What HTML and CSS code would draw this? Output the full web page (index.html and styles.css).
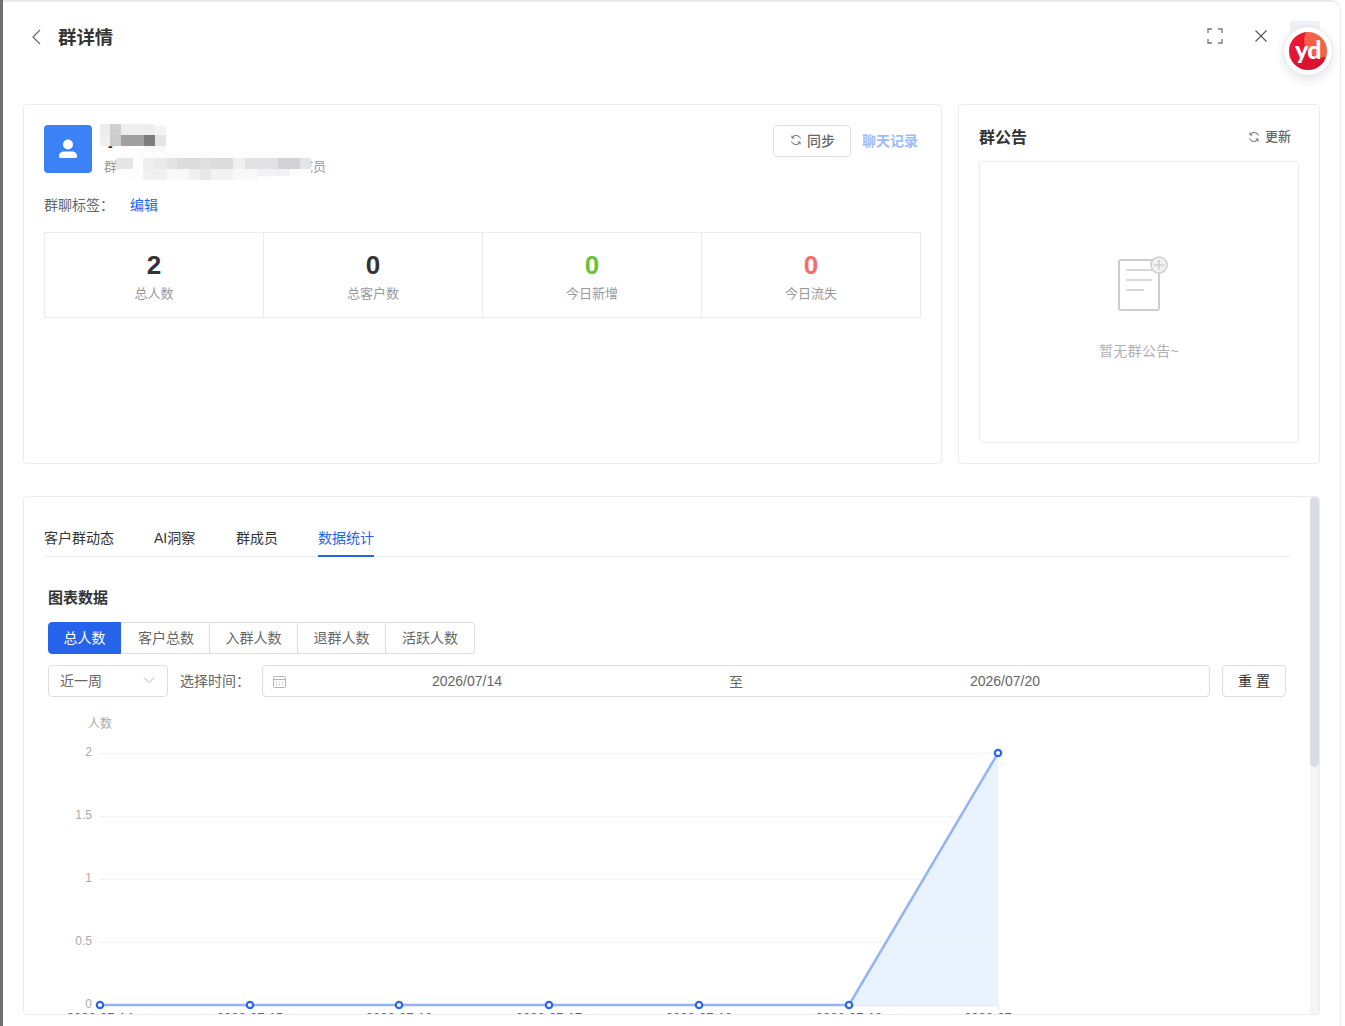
FILE: index.html
```html
<!DOCTYPE html>
<html lang="zh">
<head>
<meta charset="utf-8">
<title>群详情</title>
<link rel="stylesheet" href="styles.css">
</head>
<body>
<div class="shell">
  <div class="strip"></div>
  <main class="drawer">
    <header class="head">
      <div class="head-left">
        <svg class="back" width="10" height="16" viewBox="0 0 10 16"><path d="M9 1 2 8l7 7" fill="none" stroke="#666" stroke-width="1.2"/></svg>
        <h1 class="title">群详情</h1>
      </div>
      <div class="head-right">
        <svg width="16" height="16" viewBox="0 0 16 16" fill="none" stroke="#777" stroke-width="1.3"><path d="M1 5V1h4M11 1h4v4M15 11v4h-4M5 15H1v-4"/></svg>
        <svg width="14" height="14" viewBox="0 0 14 14" fill="none" stroke="#555" stroke-width="1.1"><path d="m1.500 1.500 11 11M12.500 1.500l-11 11"/></svg>
      </div>
    </header>

    <section class="top-row">
      <div class="card info-card">
        <div class="info-head">
          <div class="avatar">
            <svg width="24" height="24" viewBox="0 0 24 24" fill="#fff"><circle cx="12" cy="7.500" r="5"/><path d="M3 19.500c0-3.200 2.200-5 5-5h8c2.800 0 5 1.800 5 5 0 .8-.5 1.500-1.500 1.500h-15C3.500 21 3 20.300 3 19.500z"/></svg>
          </div>
          <div class="info-text">
            <div class="group-name">-</div>
            <div class="group-sub"><span>群</span><span>成员</span></div>
          </div>
          <div class="info-actions">
            <button class="btn-sync">
              <svg class="refresh" width="12" height="12" viewBox="0 0 12 12" fill="none" stroke="#666" stroke-width="1"><path d="M10.500 4.500A4.700 4.700 0 0 0 2 3.800M1.500 7.500A4.700 4.700 0 0 0 10 8.200M2 1.500v2.500h2.300M10 10.500V8H7.700"/></svg>同步
            </button>
            <a class="chat-link">聊天记录</a>
          </div>
        </div>
        <svg class="mosaic" width="240" height="60" viewBox="100 123 240 60">
          <path d="M104 123h40l22 3v20h0v14h-23v-14h-43v-20z" fill="#fbfbfb"/>
          <rect x="100" y="124" width="10" height="11" fill="#ececec"/><rect x="110" y="124" width="11" height="11" fill="#d0d0d0"/><rect x="121" y="124" width="34" height="11" fill="#eeeeee"/><rect x="155" y="126" width="11" height="9" fill="#f4f4f4"/>
          <rect x="100" y="135" width="10" height="11" fill="#f0f0f0"/><rect x="110" y="135" width="11" height="11" fill="#cccccc"/><rect x="121" y="135" width="23" height="11" fill="#a0a0a0"/><rect x="144" y="135" width="11" height="11" fill="#7d7d7d"/><rect x="155" y="135" width="11" height="11" fill="#e4e4e4"/>
          <rect x="144" y="146" width="22" height="12" fill="#f8f8f8"/>
          <path d="M116 158q1-5 17-6h178v22q-30 6-90 6h-80q-20 0-25-8z" fill="#fdfdfd"/>
          <rect x="116" y="158" width="17" height="11" fill="#e6e6e6"/><rect x="143" y="158" width="12" height="11" fill="#eeeeee"/><rect x="155" y="158" width="12" height="11" fill="#eaeaea"/><rect x="167" y="158" width="10" height="11" fill="#e4e4e4"/><rect x="177" y="158" width="23" height="11" fill="#dcdcdc"/><rect x="200" y="158" width="11" height="11" fill="#e0e0e0"/><rect x="211" y="158" width="22" height="11" fill="#dcdcde"/><rect x="233" y="158" width="12" height="11" fill="#f0f0f0"/><rect x="245" y="158" width="33" height="11" fill="#e2e2e4"/><rect x="278" y="158" width="22" height="11" fill="#d2d2d4"/><rect x="300" y="158" width="11" height="11" fill="#e4e4e6"/>
          <rect x="143" y="169" width="24" height="11" fill="#f0f0f0"/><rect x="167" y="169" width="22" height="11" fill="#f8f8f8"/><rect x="189" y="169" width="11" height="11" fill="#f0f0f0"/><rect x="200" y="169" width="11" height="11" fill="#e8e8e8"/><rect x="211" y="169" width="22" height="11" fill="#f2f2f2"/><rect x="233" y="169" width="24" height="11" fill="#f8f8f8"/><rect x="257" y="169" width="33" height="7" fill="#f2f2f2"/>
        </svg>
        <div class="tag-row"><span class="tag-label">群聊标签：</span><a class="tag-edit">编辑</a></div>
        <div class="stats">
          <div class="stat"><strong>2</strong><span>总人数</span></div>
          <div class="stat"><strong>0</strong><span>总客户数</span></div>
          <div class="stat"><strong class="green">0</strong><span>今日新增</span></div>
          <div class="stat"><strong class="red">0</strong><span>今日流失</span></div>
        </div>
      </div>

      <div class="card notice-card">
        <div class="notice-head">
          <h2>群公告</h2>
          <a class="refresh-link">
            <svg class="refresh" width="12" height="12" viewBox="0 0 12 12" fill="none" stroke="#666" stroke-width="1"><path d="M10.500 4.500A4.700 4.700 0 0 0 2 3.800M1.500 7.500A4.700 4.700 0 0 0 10 8.200M2 1.500v2.500h2.300M10 10.500V8H7.700"/></svg>更新
          </a>
        </div>
        <div class="notice-body">
          <svg width="52" height="56" viewBox="0 0 52 56">
            <rect x="1" y="4" width="40" height="50" rx="2" fill="#fff" stroke="#cdcdd2" stroke-width="2"/>
            <path d="M8 14h26M8 24h26M8 34h18" stroke="#cdcdd2" stroke-width="1.500"/>
            <circle cx="41" cy="9" r="8" fill="#f1f1f3" stroke="#cdcdd2" stroke-width="1.500"/>
            <path d="M36 9h10M41 4v10" stroke="#cdcdd2" stroke-width="1.500"/>
          </svg>
          <p>暂无群公告~</p>
        </div>
      </div>
    </section>

    <section class="card data-card">
      <div class="data-main">
        <nav class="tabs">
          <a class="tab">客户群动态</a>
          <a class="tab">AI洞察</a>
          <a class="tab">群成员</a>
          <a class="tab active">数据统计</a>
        </nav>
        <div class="chart-panel">
          <h3 class="panel-title">图表数据</h3>
          <div class="seg">
            <button class="seg-btn active">总人数</button>
            <button class="seg-btn">客户总数</button>
            <button class="seg-btn">入群人数</button>
            <button class="seg-btn">退群人数</button>
            <button class="seg-btn">活跃人数</button>
          </div>
          <div class="filters">
            <div class="select">近一周
              <svg width="12" height="8" viewBox="0 0 12 8"><path d="m1 1.500 5 5 5-5" fill="none" stroke="#b4b4b8" stroke-width="1"/></svg>
            </div>
            <label class="range-label">选择时间：</label>
            <div class="range">
              <svg class="cal" width="13" height="13" viewBox="0 0 13 13" fill="none" stroke="#b4b4b8"><rect x=".5" y="1.500" width="12" height="11" rx="1"/><path d="M.5 4.500h12M3 7h1M6 7h1M9 7h1M3 9.500h1M6 9.500h1M9 9.500h1"/></svg>
              <span class="date first">2026/07/14</span>
              <span class="sep">至</span>
              <span class="date last">2026/07/20</span>
            </div>
            <button class="reset">重 置</button>
          </div>
          <svg class="chart" width="1238" height="314" viewBox="48 700 1238 314">
            <text class="axis-name" x="100" y="728" text-anchor="middle">人数</text>
            <g class="grid">
              <path d="M100 753.500H998M100 816.500H998M100 879.500H998M100 942.500H998"/>
            </g>
            <g class="ylab" text-anchor="end">
              <text x="92" y="756">2</text>
              <text x="92" y="819">1.5</text>
              <text x="92" y="882">1</text>
              <text x="92" y="945">0.5</text>
              <text x="92" y="1008">0</text>
            </g>
            <path d="M849 1005 998 753V1005Z" fill="#e9f3ff"/>
            <g class="grid over"><path d="M886 942.500H998M924 879.500H998M961 816.500H998"/></g>
            <path d="M100 1005.500H998.500V1010" fill="none" stroke="#e0e6f1"/>
            <path d="M100 1005H849L998 753" fill="none" stroke="#94b3f5" stroke-width="2.500"/>
            <g class="dots">
              <circle cx="100" cy="1005" r="3.200"/><circle cx="250" cy="1005" r="3.200"/><circle cx="399" cy="1005" r="3.200"/><circle cx="549" cy="1005" r="3.200"/><circle cx="699" cy="1005" r="3.200"/><circle cx="849" cy="1005" r="3.200"/><circle cx="998" cy="753" r="3.200"/>
            </g>
            <g class="xlab" text-anchor="middle">
              <text x="100" y="1022">2026-07-14</text><text x="250" y="1022">2026-07-15</text><text x="399" y="1022">2026-07-16</text><text x="549" y="1022">2026-07-17</text><text x="699" y="1022">2026-07-18</text><text x="849" y="1022">2026-07-19</text><text x="988" y="1022">2026-07</text>
            </g>
          </svg>
        </div>
      </div>
      <div class="scroll-track"><div class="scroll-thumb"></div></div>
    </section>
  </main>
</div>
<div class="fab">
  <div class="fab-logo">yd</div>
</div>
</body>
</html>
```

FILE: styles.css
```css
* { box-sizing: border-box; }
html, body { margin: 0; height: 100%; overflow: hidden; background: #fff; }
body { font-family: "Liberation Sans", "Noto Sans CJK SC", sans-serif; font-size: 14px; color: #333; position: relative; }
h1, h2, h3, p { margin: 0; }
button { font-family: inherit; cursor: pointer; }

.shell { display: flex; width: 1345px; height: 1026px; }
.strip { width: 3px; background: #6f6f6f; flex: none; }
.drawer { width: 1338px; height: 1026px; flex: none; background: #fff; border-top: 2px solid #e9e9ec; border-right: 1px solid #e9e9ee; border-top-right-radius: 10px; padding: 0 20px; overflow: hidden; }

.head { height: 102px; display: flex; justify-content: space-between; padding-top: 20px; align-items: flex-start; }
.head-left { display: flex; align-items: center; margin-left: 8px; height: 30px; gap: 17px; }
.title { font-size: 18.400px; font-weight: 700; color: #333; line-height: 30px; padding-top: 1px; }
.head-right { display: flex; align-items: center; gap: 31px; height: 28px; margin-right: 52px; }

.top-row { display: flex; gap: 16px; height: 360px; }
.card { background: #fff; border: 1px solid #ebebf2; border-radius: 4px; }

.info-card { width: 919px; padding: 20px; position: relative; }
.info-head { display: flex; height: 48px; }
.avatar { width: 48px; height: 48px; background: #3b82f6; border-radius: 4px; display: flex; align-items: center; justify-content: center; flex: none; }
.info-text { margin-left: 12px; flex: 1; }
.group-name { font-size: 14px; line-height: 22px; color: #333; height: 31px; padding-left: 4px; padding-top: 10px; font-weight: 700; }
.group-sub { width: 222px; display: flex; justify-content: space-between; font-size: 13px; line-height: 22px; color: #999; }
.info-actions { display: flex; align-items: flex-start; }
.btn-sync { width: 78px; height: 32px; background: #fff; border: 1px solid #dcdfe6; border-radius: 4px; font-size: 14px; font-weight: 500; color: #666; display: flex; align-items: center; justify-content: center; gap: 5px; padding: 0 0 2px 1px; }
.chat-link { margin-left: 11px; margin-right: 3px; line-height: 32px; font-size: 14px; font-weight: 700; color: #9bbcf8; }
.mosaic { position: absolute; left: 76px; top: 18px; }

.tag-row { margin-top: 21px; height: 22px; display: flex; line-height: 22px; font-size: 14px; color: #666; }
.tag-label { width: 86px; }
.tag-edit { color: #2563eb; }

.stats { margin-top: 16px; height: 86px; width: 877px; display: grid; grid-template-columns: 219px 219px 219px 1fr; border: 1px solid #ebebf2; }
.stat { display: flex; flex-direction: column; align-items: center; padding-top: 14px; border-right: 1px solid #ebebf2; }
.stat:last-child { border-right: 0; }
.stat strong { font-size: 26px; line-height: 36px; color: #333; font-weight: 700; }
.stat strong.green { color: #67c23a; }
.stat strong.red { color: #f56c6c; }
.stat span { margin-top: 1px; font-size: 13px; line-height: 20px; color: #999; }

.notice-card { width: 362px; padding: 20px; display: flex; flex-direction: column; }
.notice-head { height: 36px; display: flex; justify-content: space-between; align-items: flex-start; padding-top: 1px; }
.notice-head h2 { font-size: 16px; line-height: 24px; font-weight: 700; color: #333; }
.refresh-link { margin: -1px 8px 0 0; font-size: 13px; font-weight: 500; line-height: 24px; color: #666; display: flex; align-items: center; gap: 5px; }
.notice-body { height: 282px; border: 1px solid #ebebf2; border-radius: 4px; display: flex; flex-direction: column; align-items: center; padding-top: 94px; }
.notice-body svg { margin-left: 10px; }
.notice-body p { margin-top: 28px; font-size: 14px; line-height: 22px; letter-spacing: .3px; color: #b0b0b4; }

.data-card { margin-top: 32px; height: 519px; display: flex; overflow: hidden; }
.data-main { flex: 1; min-width: 0; padding: 20px 20px 0; overflow: hidden; }
.tabs { display: flex; gap: 40px; height: 40px; border-bottom: 1px solid #ebebf2; }
.tab { height: 40px; padding-top: 1px; line-height: 40px; font-size: 14px; color: #333; }
.tab:nth-child(2) { width: 42px; }
.tab.active { color: #2563eb; border-bottom: 2px solid #2563eb; }

.chart-panel { padding: 0 4px; }
.panel-title { margin-top: 30px; font-size: 15px; line-height: 22px; font-weight: 700; color: #333; }
.seg { margin-top: 13px; display: inline-flex; height: 32px; vertical-align: top; }
.seg-btn { width: 88px; height: 32px; padding: 0 0 2px; background: #fff; border: 1px solid #dcdfe6; border-left: 0; font-size: 14px; color: #666; }
.seg-btn:first-child { width: 73px; border-radius: 4px 0 0 4px; border: 1px solid #2563eb; }
.seg-btn:nth-child(2) { width: 89px; padding-left: 2px; }
.seg-btn:last-child { width: 89px; border-radius: 0 4px 4px 0; }
.seg-btn.active { background: #2563eb; color: #fff; }

.filters { margin-top: 11px; display: flex; align-items: center; height: 32px; }
.select { width: 120px; height: 32px; flex: none; border: 1px solid #dcdfe6; border-radius: 4px; padding: 0 12px 2px 11px; display: flex; align-items: center; justify-content: space-between; font-size: 14px; color: #666; }
.range-label { margin-left: 12px; width: 82px; flex: none; font-size: 14px; color: #666; padding-bottom: 2px; }
.range { position: relative; width: 948px; flex: none; height: 32px; border: 1px solid #dcdfe6; border-radius: 4px; display: grid; grid-template-columns: 1fr 30px 1fr; align-items: center; font-size: 14px; color: #666; text-align: center; }
.cal { position: absolute; left: 10px; top: 9px; }
.date.first { padding-right: 50px; }
.date.last { padding-left: 50px; }
.reset { margin-left: 12px; width: 64px; height: 32px; flex: none; background: #fff; border: 1px solid #dcdfe6; border-radius: 4px; font-size: 14px; color: #333; padding: 0 0 2px; }

.chart { display: block; margin-top: 3px; overflow: hidden; }
.chart text { font-family: "Liberation Sans", "Noto Sans CJK SC", sans-serif; }
.axis-name { font-size: 12px; fill: #aaa; }
.grid path { fill: none; stroke: #eef0f4; stroke-dasharray: 5 3; }
.ylab text { font-size: 12px; fill: #aaa; }
.xlab text { font-size: 13px; fill: #666; }
.dots circle { fill: #fff; stroke: #2a66ee; stroke-width: 2.200; }

.scroll-track { width: 9px; flex: none; background: #f4f5f8; }
.scroll-thumb { height: 270px; background: #d9dce3; border-radius: 5px; }

.fab { position: absolute; left: 1290px; top: 21px; width: 30px; height: 30px; background: #f0f1f6; border-radius: 2px; }
.fab-logo { position: absolute; left: -6px; top: 6px; width: 48px; height: 48px; border-radius: 50%; border: 5px solid #fff; outline: 1px solid #e6e7f2; background: radial-gradient(circle at 85% 22%, #f4604a 0 38%, transparent 40%), linear-gradient(140deg, #f01c38, #d20f2c); box-shadow: 0 4px 12px rgba(0,0,0,.12); color: #fff; font-family: "Lato", sans-serif; font-weight: 900; font-size: 25px; line-height: 34px; letter-spacing: -.5px; text-align: center; }
```
